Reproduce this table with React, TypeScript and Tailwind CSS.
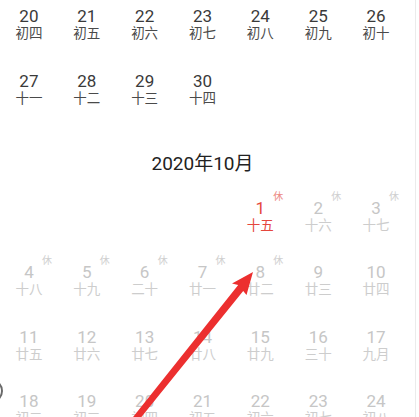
import React from "react";

type Day = { d: number; lunar: string; rest?: boolean; red?: boolean };

const septRows: (Day | null)[][] = [
  [
    { d: 20, lunar: "初四" },
    { d: 21, lunar: "初五" },
    { d: 22, lunar: "初六" },
    { d: 23, lunar: "初七" },
    { d: 24, lunar: "初八" },
    { d: 25, lunar: "初九" },
    { d: 26, lunar: "初十" },
  ],
  [
    { d: 27, lunar: "十一" },
    { d: 28, lunar: "十二" },
    { d: 29, lunar: "十三" },
    { d: 30, lunar: "十四" },
    null,
    null,
    null,
  ],
];

const octRows: (Day | null)[][] = [
  [
    null,
    null,
    null,
    null,
    { d: 1, lunar: "十五", rest: true, red: true },
    { d: 2, lunar: "十六", rest: true },
    { d: 3, lunar: "十七", rest: true },
  ],
  [
    { d: 4, lunar: "十八", rest: true },
    { d: 5, lunar: "十九", rest: true },
    { d: 6, lunar: "二十", rest: true },
    { d: 7, lunar: "廿一", rest: true },
    { d: 8, lunar: "廿二", rest: true },
    { d: 9, lunar: "廿三" },
    { d: 10, lunar: "廿四" },
  ],
  [
    { d: 11, lunar: "廿五" },
    { d: 12, lunar: "廿六" },
    { d: 13, lunar: "廿七" },
    { d: 14, lunar: "廿八" },
    { d: 15, lunar: "廿九" },
    { d: 16, lunar: "三十" },
    { d: 17, lunar: "九月" },
  ],
  [
    { d: 18, lunar: "初二" },
    { d: 19, lunar: "初三" },
    { d: 20, lunar: "初四" },
    { d: 21, lunar: "初五" },
    { d: 22, lunar: "初六" },
    { d: 23, lunar: "初七" },
    { d: 24, lunar: "初八" },
  ],
];

function Cell({ day, past }: { day: Day | null; past: boolean }) {
  if (!day) return <div />;
  const numColor = day.red ? "text-[#e5473d]" : past ? "text-[#3a3a3a]" : "text-[#c6c6c6]";
  const lunarColor = day.red ? "text-[#e5473d]" : past ? "text-[#4a4a4a]" : "text-[#cdcdcd]";
  return (
    <div className="relative flex flex-col items-center">
      <span className={`text-[17px] leading-[17px] ${numColor}`}>{day.d}</span>
      <span className={`text-[13.5px] leading-[16px] ${lunarColor}`}>{day.lunar}</span>
      {day.rest && (
        <span
          className={`absolute left-[calc(50%+13px)] top-[-9px] text-[10px] leading-[12px] ${
            day.red ? "text-[#ec8a83]" : "text-[#d0d0d0]"
          }`}
        >
          休
        </span>
      )}
    </div>
  );
}

function Rows({ rows, past, rowH }: { rows: (Day | null)[][]; past: boolean; rowH: string }) {
  return (
    <div className="flex flex-col">
      {rows.map((row, i) => (
        <div key={i} className={`grid grid-cols-7 ${rowH}`}>
          {row.map((day, j) => (
            <Cell key={j} day={day} past={past} />
          ))}
        </div>
      ))}
    </div>
  );
}

export default function App() {
  return (
    <div
      className="relative flex h-[417px] w-[419px] overflow-hidden bg-white"
      style={{ fontFamily: 'Roboto, "Noto Sans CJK SC", sans-serif' }}
    >
      <div className="w-[415px]">
        <div className="w-[405px] pt-[7.5px]">
          <Rows rows={septRows} past={true} rowH="h-[65px]" />
          <div className="mt-[14.5px] mb-[23.5px] text-center text-[19px] leading-[24px] text-[#222]">
            2020年10月
          </div>
          <Rows rows={octRows} past={false} rowH="h-[64.5px]" />
        </div>
      </div>
      <div className="h-full w-px bg-[#ebebeb]" />

      {/* partial floating button at the left edge */}
      <div className="absolute left-[-21px] top-[379px] h-[24px] w-[24px] rounded-full border-2 border-[#6a6a6a]" />

      {/* red annotation arrow */}
      <svg className="pointer-events-none absolute inset-0" width="419" height="417" viewBox="0 0 419 417">
        <polygon
          points="253,272 246.5,295 243.2,291 132.5,428 127.5,424 238.2,285 232,283.5"
          fill="#ec2f2f"
        />
      </svg>
    </div>
  );
}
